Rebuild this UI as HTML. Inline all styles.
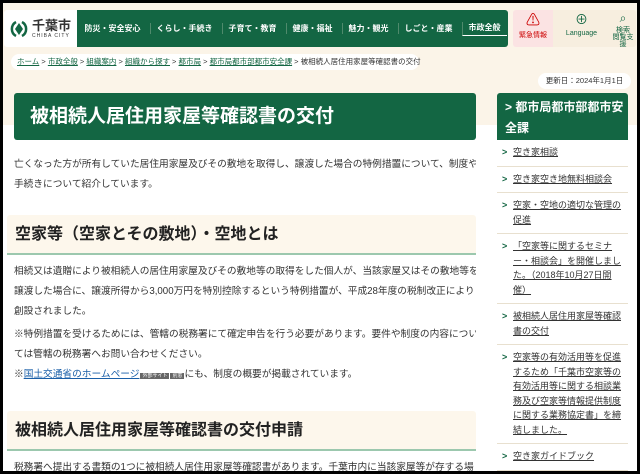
<!DOCTYPE html>
<html><head><meta charset="utf-8"><style>
*{margin:0;padding:0;box-sizing:border-box}
html,body{width:640px;height:474px;overflow:hidden}
body{background:#000;font-family:"Liberation Sans","Noto Sans CJK JP",sans-serif;color:#333;position:relative}
#f{position:absolute;left:3px;top:3px;width:634px;height:468px;background:#fff;overflow:hidden}
.top{position:absolute;left:0;top:0;width:634px;height:122px;background:#fbf4e8}
.hdr{position:absolute;top:7px;height:37px}
.logo{left:1px;width:73px;background:#fff;border-radius:3px 0 0 3px}
.nav{left:74px;width:431px;background:#136643;display:flex;align-items:center;justify-content:space-around;color:#fff;font-size:8px;font-weight:bold;border-radius:0 3px 3px 0}
.nav span{padding:0 6px;border-left:1px solid #4f8a6c}
.nav span:first-child{border:none}
.pk{background:#fbe3e3;font-size:7px;text-align:center;color:#c00}
.bc{position:absolute;left:8px;top:51px;height:16px;width:408px;background:#fff;border-radius:8px;font-size:7.5px;line-height:16px;padding-left:6px;color:#333;white-space:nowrap}
.bc a{color:#136643;text-decoration:underline}
.date{position:absolute;left:535px;top:70px;width:93px;height:16px;background:#fff;border-radius:8px;font-size:7.5px;line-height:16px;text-align:center}
.title{position:absolute;left:11px;top:90px;width:462px;height:47px;background:#136643;border-radius:3px;color:#fff;font-size:19px;font-weight:bold;line-height:47px;padding-left:16px}
p{position:absolute;left:11px;width:462px;font-size:9.7px;line-height:20px;white-space:nowrap;overflow:hidden}
.h2{position:absolute;left:4px;width:469px;height:40px;background:#fdf7ec;border-bottom:2px solid #9cc8ae;font-size:16px;font-weight:bold;line-height:40px;padding-left:8px;color:#222;border-radius:3px 3px 0 0}
a{color:#1a5fa8}
.side{position:absolute;left:494px;top:90px;width:131px;height:378px;overflow:hidden}
.sh{background:#136643;color:#fff;font-size:12px;font-weight:bold;line-height:21px;padding:4px 4px 4px 8px;border-radius:3px 3px 0 0;height:47px}
.si{font-size:9px;line-height:14.5px;padding:5px 4px 6px 16px;border-bottom:1px solid #e8e0cf;position:relative;color:#333}
.si u{color:#333}
.si:before{content:">";position:absolute;left:5px;color:#136643;font-weight:bold}
</style></head><body><div id="f">
<div class="top"></div>
<div class="hdr logo"><svg width="20" height="20" viewBox="0 0 20 20" style="position:absolute;left:5px;top:9px"><path d="M7 3A8 8 0 0 0 7 17M13 3A8 8 0 0 1 13 17" stroke="#136643" stroke-width="2.5" fill="none"/><path d="M10 4L14 10L10 16L6 10Z" fill="#136643"/></svg><div style="position:absolute;left:28px;top:5px;font-size:13px;font-weight:bold;color:#333">千葉市</div><div style="position:absolute;left:28px;top:23px;font-size:5px;color:#333;letter-spacing:1px">CHIBA CITY</div></div>
<div class="hdr nav"><span>防災・安全安心</span><span>くらし・手続き</span><span>子育て・教育</span><span>健康・福祉</span><span>魅力・観光</span><span>しごと・産業</span><span style="border-bottom:1px solid #fff;padding-bottom:2px">市政全般</span></div>
<div class="hdr pk" style="left:510px;width:40px;border-radius:3px 0 0 3px"><div style="font-size:14px;line-height:20px">⚠</div>緊急情報</div>
<div class="hdr pk" style="left:550px;width:57px;background:#f7eedf;color:#136643"><div style="font-size:13px;line-height:20px">⊕</div>Language</div>
<div class="hdr pk" style="left:607px;width:26px;background:#f7eedf;color:#136643;border-radius:0 3px 3px 0;line-height:7px"><div style="font-size:12px;line-height:17px">⌕</div>検索<br>閲覧支援</div>
<div class="bc"><a>ホーム</a> &gt; <a>市政全般</a> &gt; <a>組織案内</a> &gt; <a>組織から探す</a> &gt; <a>都市局</a> &gt; <a>都市局都市部都市安全課</a> &gt; 被相続人居住用家屋等確認書の交付</div>
<div class="date">更新日：2024年1月1日</div>
<div class="title">被相続人居住用家屋等確認書の交付</div>
<p style="top:152px">亡くなった方が所有していた居住用家屋及びその敷地を取得し、譲渡した場合の特例措置について、制度や<br>手続きについて紹介しています。</p>
<div class="h2" style="top:212px">空家等（空家とその敷地）・空地とは</div>
<p style="top:259px">相続又は遺贈により被相続人の居住用家屋及びその敷地等の取得をした個人が、当該家屋又はその敷地等を<br>譲渡した場合に、譲渡所得から3,000万円を特別控除するという特例措置が、平成28年度の税制改正により<br>創設されました。</p>
<p style="top:322px">※特例措置を受けるためには、管轄の税務署にて確定申告を行う必要があります。要件や制度の内容につい<br>ては管轄の税務署へお問い合わせください。</p>
<p style="top:362px">※<a style="text-decoration:underline">国土交通省のホームページ</a><span style="background:#666;color:#fff;font-size:5px;padding:0 2px;margin:0 1px">外部サイト</span><span style="background:#666;color:#fff;font-size:5px;padding:0 2px">別窓</span>にも、制度の概要が掲載されています。</p>
<div class="h2" style="top:408px">被相続人居住用家屋等確認書の交付申請</div>
<p style="top:455px">税務署へ提出する書類の1つに被相続人居住用家屋等確認書があります。千葉市内に当該家屋等が存する場</p>
<div class="side">
<div class="sh">&gt; 都市局都市部都市安全課</div>
<div class="si"><u>空き家相談</u></div>
<div class="si"><u>空き家空き地無料相談会</u></div>
<div class="si"><u>空家・空地の適切な管理の促進</u></div>
<div class="si"><u>「空家等に関するセミナー・相談会」を開催しました。（2018年10月27日開催）</u></div>
<div class="si"><u>被相続人居住用家屋等確認書の交付</u></div>
<div class="si"><u>空家等の有効活用等を促進するため「千葉市空家等の有効活用等に関する相談業務及び空家等情報提供制度に関する業務協定書」を締結しました。</u></div>
<div class="si"><u>空き家ガイドブック</u></div>
<div class="si"><u>空家等の適正な管理を促進するため、（公社）千葉市シルバー人材センターと</u></div>
</div>
</div></body></html>
